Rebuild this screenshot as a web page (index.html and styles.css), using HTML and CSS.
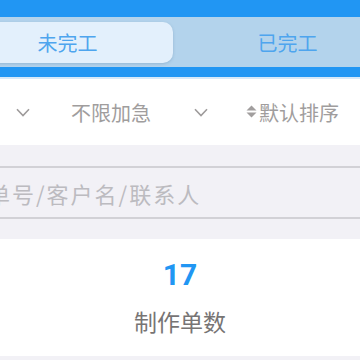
FILE: index.html
```html
<!DOCTYPE html>
<html lang="zh">
<head>
<meta charset="utf-8">
<link rel="stylesheet" href="styles.css">
</head>
<body>
<div class="page">
  <header class="header">
    <div class="seg">
      <div class="seg-item active">未完工</div>
      <div class="seg-item">已完工</div>
    </div>
  </header>
  <div class="filters">
    <div class="filter first">
      <svg class="chev" width="14" height="9" viewBox="0 0 14 9"><path d="M1 1.2 L7 7.5 L13 1.2" fill="none" stroke="#9e9b9b" stroke-width="1.6"/></svg>
    </div>
    <div class="filter mid">
      <span>不限加急</span>
      <svg class="chev" width="14" height="9" viewBox="0 0 14 9"><path d="M1 1.2 L7 7.5 L13 1.2" fill="none" stroke="#9e9b9b" stroke-width="1.6"/></svg>
    </div>
    <div class="filter sort">
      <svg class="sorticon" width="11" height="13" viewBox="0 0 11 13"><path d="M5.5 0.5 L10.5 5.6 L0.5 5.6 Z" fill="#a19e9e"/><path d="M5.5 12.5 L10.5 7.4 L0.5 7.4 Z" fill="#a19e9e"/></svg>
      <span>默认排序</span>
    </div>
  </div>
  <div class="searchwrap">
    <div class="search">单号/客户名/联系人</div>
  </div>
  <div class="stat">
    <div class="num">17</div>
    <div class="label">制作单数</div>
  </div>
</div>
</body>
</html>
```
FILE: styles.css
```css
html, body {
  margin: 0;
  padding: 0;
  background: #f2f1f6;
}
.page {
  width: 360px;
  height: 360px;
  overflow: hidden;
  font-family: "Noto Sans CJK SC", "Noto Sans", sans-serif;
  background: #f2f1f6;
}
.header {
  background: #2196f3;
  padding: 17px 0 10px;
  border-bottom: 2px solid #d6e9f9;
}
.seg {
  display: flex;
  height: 50px;
  box-sizing: border-box;
  padding: 5px 0 4px;
  background: #b3d3ec;
  margin-left: -38px;
  width: 440px;
}
.seg-item {
  display: flex;
  align-items: center;
  justify-content: center;
  font-size: 20px;
  color: #4ea5ee;
  width: 229px;
}
.seg-item.active {
  width: 211px;
  background: #e3f0fc;
  border-radius: 0 10px 10px 0;
  box-shadow: 0 1px 3px rgba(60, 100, 140, 0.25);
}
.filters {
  background: #fff;
  height: 66px;
  display: flex;
  align-items: center;
  color: #a09d9d;
  font-size: 20px;
}
.filter {
  display: flex;
  align-items: center;
}
.filter.first {
  padding-left: 16px;
}
.filter.mid {
  margin-left: 41px;
  gap: 43px;
}
.filter.sort {
  margin-left: 38px;
  gap: 2px;
}
.chev {
  display: block;
  margin-top: 1px;
}
.sorticon {
  display: block;
  margin-top: -2px;
}
.searchwrap {
  padding: 21px 0 20px;
}
.search {
  margin-left: -40px;
  margin-right: -20px;
  height: 53px;
  box-sizing: border-box;
  border-top: 2px solid #d2d1d6;
  border-bottom: 2px solid #d2d1d6;
  border-radius: 6px;
  display: flex;
  align-items: center;
  padding-left: 28px;
  font-size: 22px;
  color: #bcbbc0;
  letter-spacing: 2px;
  white-space: nowrap;
}
.stat {
  background: #fff;
  height: 117px;
  display: flex;
  flex-direction: column;
  align-items: center;
}
.num {
  margin-top: 18px;
  font-family: "Roboto", "Liberation Sans", sans-serif;
  font-weight: 700;
  font-size: 30px;
  line-height: 36px;
  color: #2196f3;
}
.label {
  margin-top: 12px;
  font-size: 23px;
  line-height: 32px;
  color: #777474;
}
```
